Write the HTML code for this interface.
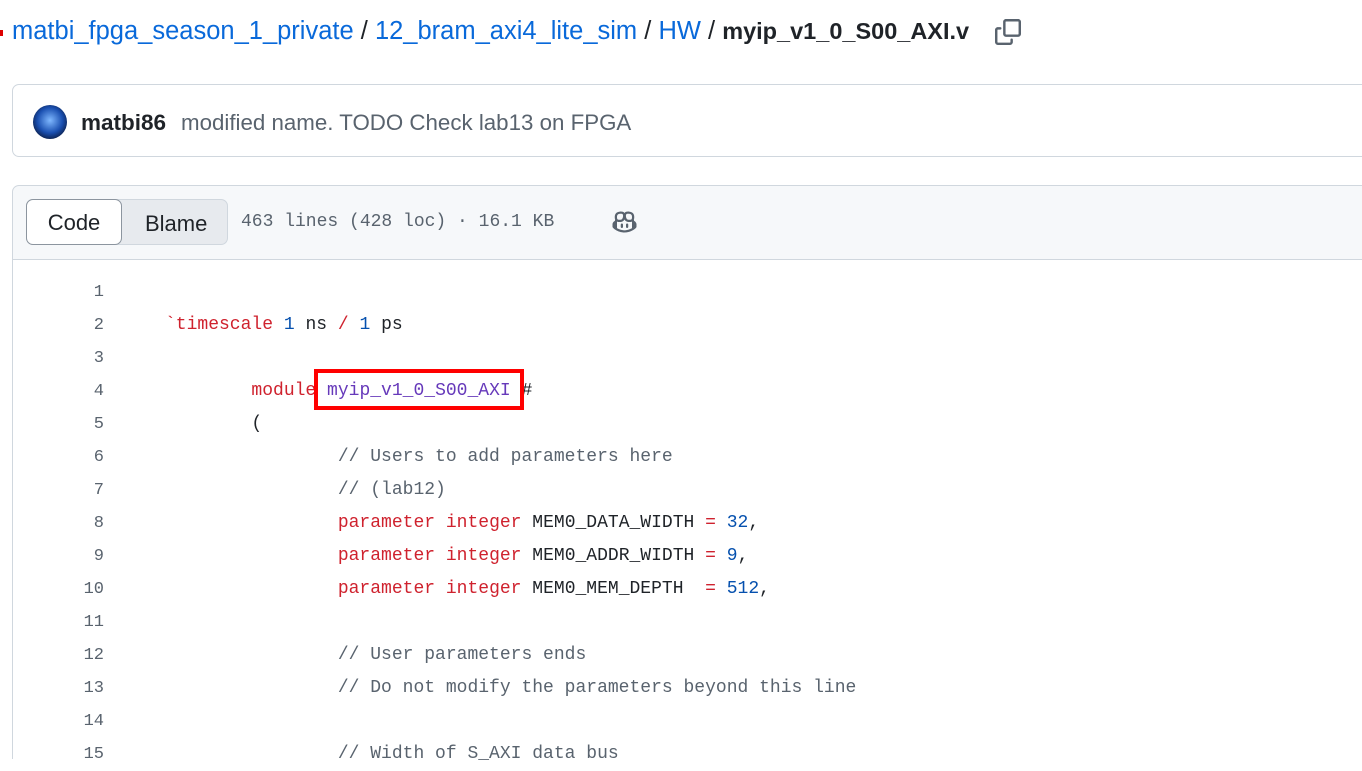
<!DOCTYPE html>
<html><head><meta charset="utf-8"><style>
body{margin:0;width:1362px;height:755px;overflow:hidden;background:#fff;font-family:"Liberation Sans",sans-serif;position:relative}
.abs{position:absolute}
.bc{left:12px;top:17px;font-size:25.5px;color:#1f2328;white-space:nowrap}
.bc a{color:#0969da;text-decoration:none}
.bc b{font-size:23.5px}
.commit{left:12px;top:84px;width:1380px;height:73px;border:1px solid #d0d7de;border-radius:7px;box-sizing:border-box}
.hdr{left:12px;top:185px;width:1380px;height:75px;background:#f6f8fa;border:1px solid #d0d7de;border-radius:7px 7px 0 0;box-sizing:border-box}
.code{font-family:"Liberation Mono",monospace;font-size:18px;color:#1f2328;white-space:pre}
.ln{position:absolute;width:104px;left:0;text-align:right;color:#59636e;font-family:"Liberation Mono",monospace;font-size:17px}
.k{color:#cf222e}.n{color:#0550ae}.c{color:#59636e}.e{color:#6639ba}
</style></head><body>
<div class="abs" style="left:0;top:30px;width:3px;height:6px;background:#d00"></div>
<div class="abs bc"><a>matbi_fpga_season_1_private</a> / <a>12_bram_axi4_lite_sim</a> / <a>HW</a> / <b>myip_v1_0_S00_AXI.v</b></div>
<svg class="abs" style="left:995px;top:19px" width="26" height="26" viewBox="0 0 16 16"><path fill="#59636e" d="M0 6.75C0 5.784.784 5 1.750 5h1.5a.75.75 0 0 1 0 1.5h-1.5a.25.25 0 0 0-.25.25v7.5c0 .138.112.25.25.25h7.5a.25.25 0 0 0 .25-.25v-1.5a.75.75 0 0 1 1.5 0v1.5A1.75 1.75 0 0 1 9.25 16h-7.5A1.75 1.75 0 0 1 0 14.25ZM5 1.75C5 .784 5.784 0 6.75 0h7.5C15.216 0 16 .784 16 1.75v7.5A1.75 1.75 0 0 1 14.25 11h-7.5A1.75 1.75 0 0 1 5 9.25Zm1.75-.25a.25.25 0 0 0-.25.25v7.5c0 .138.112.25.25.25h7.5a.25.25 0 0 0 .25-.25v-7.5a.25.25 0 0 0-.25-.25Z"/></svg>
<div class="abs commit"></div>
<div class="abs" style="left:33px;top:105px;width:34px;height:34px;border-radius:50%;background:radial-gradient(circle at 50% 45%,#7fb8ff,#1a4fb0 50%,#0a1a40 80%)"></div>
<div class="abs" style="left:81px;top:110px;font-size:22.5px;color:#1f2328;font-weight:bold">matbi86</div>
<div class="abs" style="left:181px;top:110px;font-size:22.3px;color:#59636e">modified name. TODO Check lab13 on FPGA</div>
<div class="abs hdr"></div>
<div class="abs" style="left:26px;top:199px;width:202px;height:46px;border:1px solid #d0d7de;border-radius:7px;background:#e7eaee;box-sizing:border-box"></div>
<div class="abs" style="left:26px;top:199px;width:96px;height:46px;border:1px solid #8c959f;border-radius:7px;background:#fff;box-sizing:border-box;font-size:22px;text-align:center;line-height:46px;color:#1f2328">Code</div>
<div class="abs" style="left:145px;top:211px;font-size:22px;color:#1f2328">Blame</div>
<div class="abs code" style="left:241px;top:212px;font-size:18px;color:#59636e">463 lines (428 loc) · 16.1 KB</div>
<svg class="abs" style="left:611px;top:210px" width="27" height="24" viewBox="0 0 16 16"><path fill="#59636e" d="M7.998 15.035c-4.562 0-7.873-2.914-7.998-3.749V9.338c.085-.628.677-1.686 1.588-2.065.013-.07.024-.143.036-.218.029-.183.06-.384.126-.612-.201-.508-.254-1.084-.254-1.656 0-.87.128-1.769.693-2.484.579-.733 1.494-1.124 2.724-1.261 1.206-.134 2.262.034 2.944.765.05.053.096.108.139.165.044-.057.094-.112.143-.165.682-.731 1.738-.899 2.944-.765 1.23.137 2.145.528 2.724 1.261.566.715.693 1.614.693 2.484 0 .572-.053 1.148-.254 1.656.066.228.098.429.126.612.012.076.024.148.037.218.924.385 1.522 1.471 1.591 2.095v1.872c0 .766-3.351 3.795-8.002 3.795Zm0-1.485c2.28 0 4.584-1.11 5.002-1.433V7.862l-.023-.116c-.49.21-1.075.291-1.727.291-1.146 0-2.059-.327-2.710-.991A3.222 3.222 0 0 1 8 6.303a3.240 3.240 0 0 1-.544.743c-.65.664-1.563.991-2.710.991-.652 0-1.236-.081-1.727-.291l-.023.116v4.255c.419.323 2.722 1.433 5.002 1.433ZM6.762 2.830c-.193-.206-.637-.413-1.682-.297-1.019.113-1.479.404-1.713.7-.247.312-.369.789-.369 1.554 0 .793.129 1.171.308 1.371.162.181.519.379 1.442.379.853 0 1.339-.235 1.638-.54.315-.322.527-.827.617-1.553.117-.935-.037-1.395-.241-1.614Zm4.155-.297c-1.044-.116-1.488.091-1.681.297-.204.219-.359.679-.242 1.614.091.726.303 1.231.618 1.553.299.305.784.54 1.638.54.922 0 1.280-.198 1.442-.379.179-.2.308-.578.308-1.371 0-.765-.123-1.242-.37-1.554-.233-.296-.693-.587-1.713-.7Z"/><path fill="#59636e" d="M6.25 9.037a.75.75 0 0 1 .75.75v1.501a.75.75 0 0 1-1.5 0V9.787a.75.75 0 0 1 .75-.75Zm4.25.75v1.501a.75.75 0 0 1-1.5 0V9.787a.75.75 0 0 1 1.5 0Z"/></svg>
<div class="abs" style="left:12px;top:259px;width:1px;height:500px;background:#d0d7de"></div>
<div class="abs" style="left:0;top:283px;width:1362px">
<div class="ln" style="top:0">1</div>
<div class="ln" style="top:33px">2</div>
<div class="ln" style="top:66px">3</div>
<div class="ln" style="top:99px">4</div>
<div class="ln" style="top:132px">5</div>
<div class="ln" style="top:165px">6</div>
<div class="ln" style="top:198px">7</div>
<div class="ln" style="top:231px">8</div>
<div class="ln" style="top:264px">9</div>
<div class="ln" style="top:297px">10</div>
<div class="ln" style="top:330px">11</div>
<div class="ln" style="top:363px">12</div>
<div class="ln" style="top:396px">13</div>
<div class="ln" style="top:429px">14</div>
<div class="ln" style="top:462px">15</div>
<div class="abs code" style="left:165px;top:26px;line-height:33px"><span class="k">`timescale</span> <span class="n">1</span> ns <span class="k">/</span> <span class="n">1</span> ps

        <span class="k">module</span> <span class="e">myip_v1_0_S00_AXI</span> #
        (
                <span class="c">// Users to add parameters here</span>
                <span class="c">// (lab12)</span>
                <span class="k">parameter</span> <span class="k">integer</span> MEM0_DATA_WIDTH <span class="k">=</span> <span class="n">32</span>,
                <span class="k">parameter</span> <span class="k">integer</span> MEM0_ADDR_WIDTH <span class="k">=</span> <span class="n">9</span>,
                <span class="k">parameter</span> <span class="k">integer</span> MEM0_MEM_DEPTH  <span class="k">=</span> <span class="n">512</span>,

                <span class="c">// User parameters ends</span>
                <span class="c">// Do not modify the parameters beyond this line</span>

                <span class="c">// Width of S_AXI data bus</span></div>
</div>
<div class="abs" style="left:314px;top:369px;width:210px;height:41px;border:4px solid #f00;box-sizing:border-box"></div>
</body></html>
